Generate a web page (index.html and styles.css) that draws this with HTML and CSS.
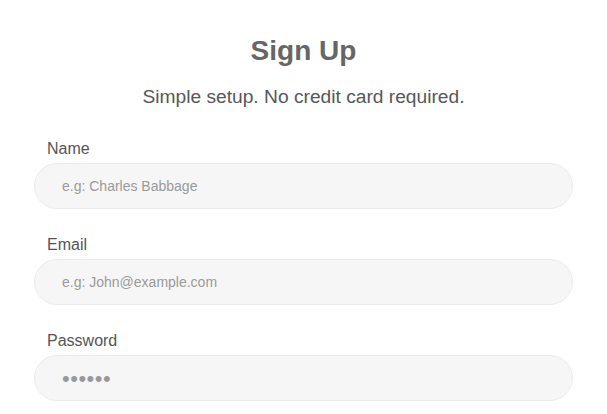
FILE: index.html
```html
<!DOCTYPE html>
<html lang="en">
<head>
<meta charset="utf-8">
<title>Sign Up</title>
<link rel="stylesheet" href="styles.css">
</head>
<body>
<main class="signup">
  <h1 class="title">Sign Up</h1>
  <p class="subtitle">Simple setup. No credit card required.</p>
  <form class="form">
    <div class="field">
      <label class="label" for="name">Name</label>
      <input class="input" id="name" type="text" placeholder="e.g: Charles Babbage">
    </div>
    <div class="field">
      <label class="label" for="email">Email</label>
      <input class="input" id="email" type="email" placeholder="e.g: John@example.com">
    </div>
    <div class="field">
      <label class="label" for="password">Password</label>
      <input class="input input-password" id="password" type="password" placeholder="••••••">
    </div>
  </form>
</main>
</body>
</html>
```
FILE: styles.css
```css
html, body {
  margin: 0;
  padding: 0;
  background: #ffffff;
}

body {
  font-family: "Liberation Sans", Arial, Helvetica, sans-serif;
  color: #555555;
}

.signup {
  padding: 34px 34px 0;
}

.title {
  margin: 0;
  font-size: 28px;
  line-height: 34px;
  font-weight: bold;
  text-align: center;
  color: #666666;
}

.subtitle {
  margin: 17px 0 0;
  font-size: 19.2px;
  line-height: 24px;
  text-align: center;
  color: #575757;
}

.form {
  display: flex;
  flex-direction: column;
  gap: 25px;
  margin-top: 29px;
}

.field {
  display: flex;
  flex-direction: column;
  gap: 4px;
}

.label {
  padding-left: 13px;
  font-size: 16px;
  line-height: 21px;
  color: #555555;
}

.input {
  box-sizing: border-box;
  width: 100%;
  height: 46px;
  margin: 0;
  padding: 0 26px 0 27px;
  border: 1px solid #ebebeb;
  border-radius: 23px;
  background: #f6f6f6;
  font-family: "Liberation Sans", Arial, Helvetica, sans-serif;
  font-size: 14px;
  color: #555555;
  outline: none;
}

.input::placeholder {
  color: #9a9a9a;
  opacity: 1;
}

.input-password {
  padding-top: 5px;
}

.input-password::placeholder {
  font-size: 22px;
  letter-spacing: 0.5px;
  color: #999999;
}
```
